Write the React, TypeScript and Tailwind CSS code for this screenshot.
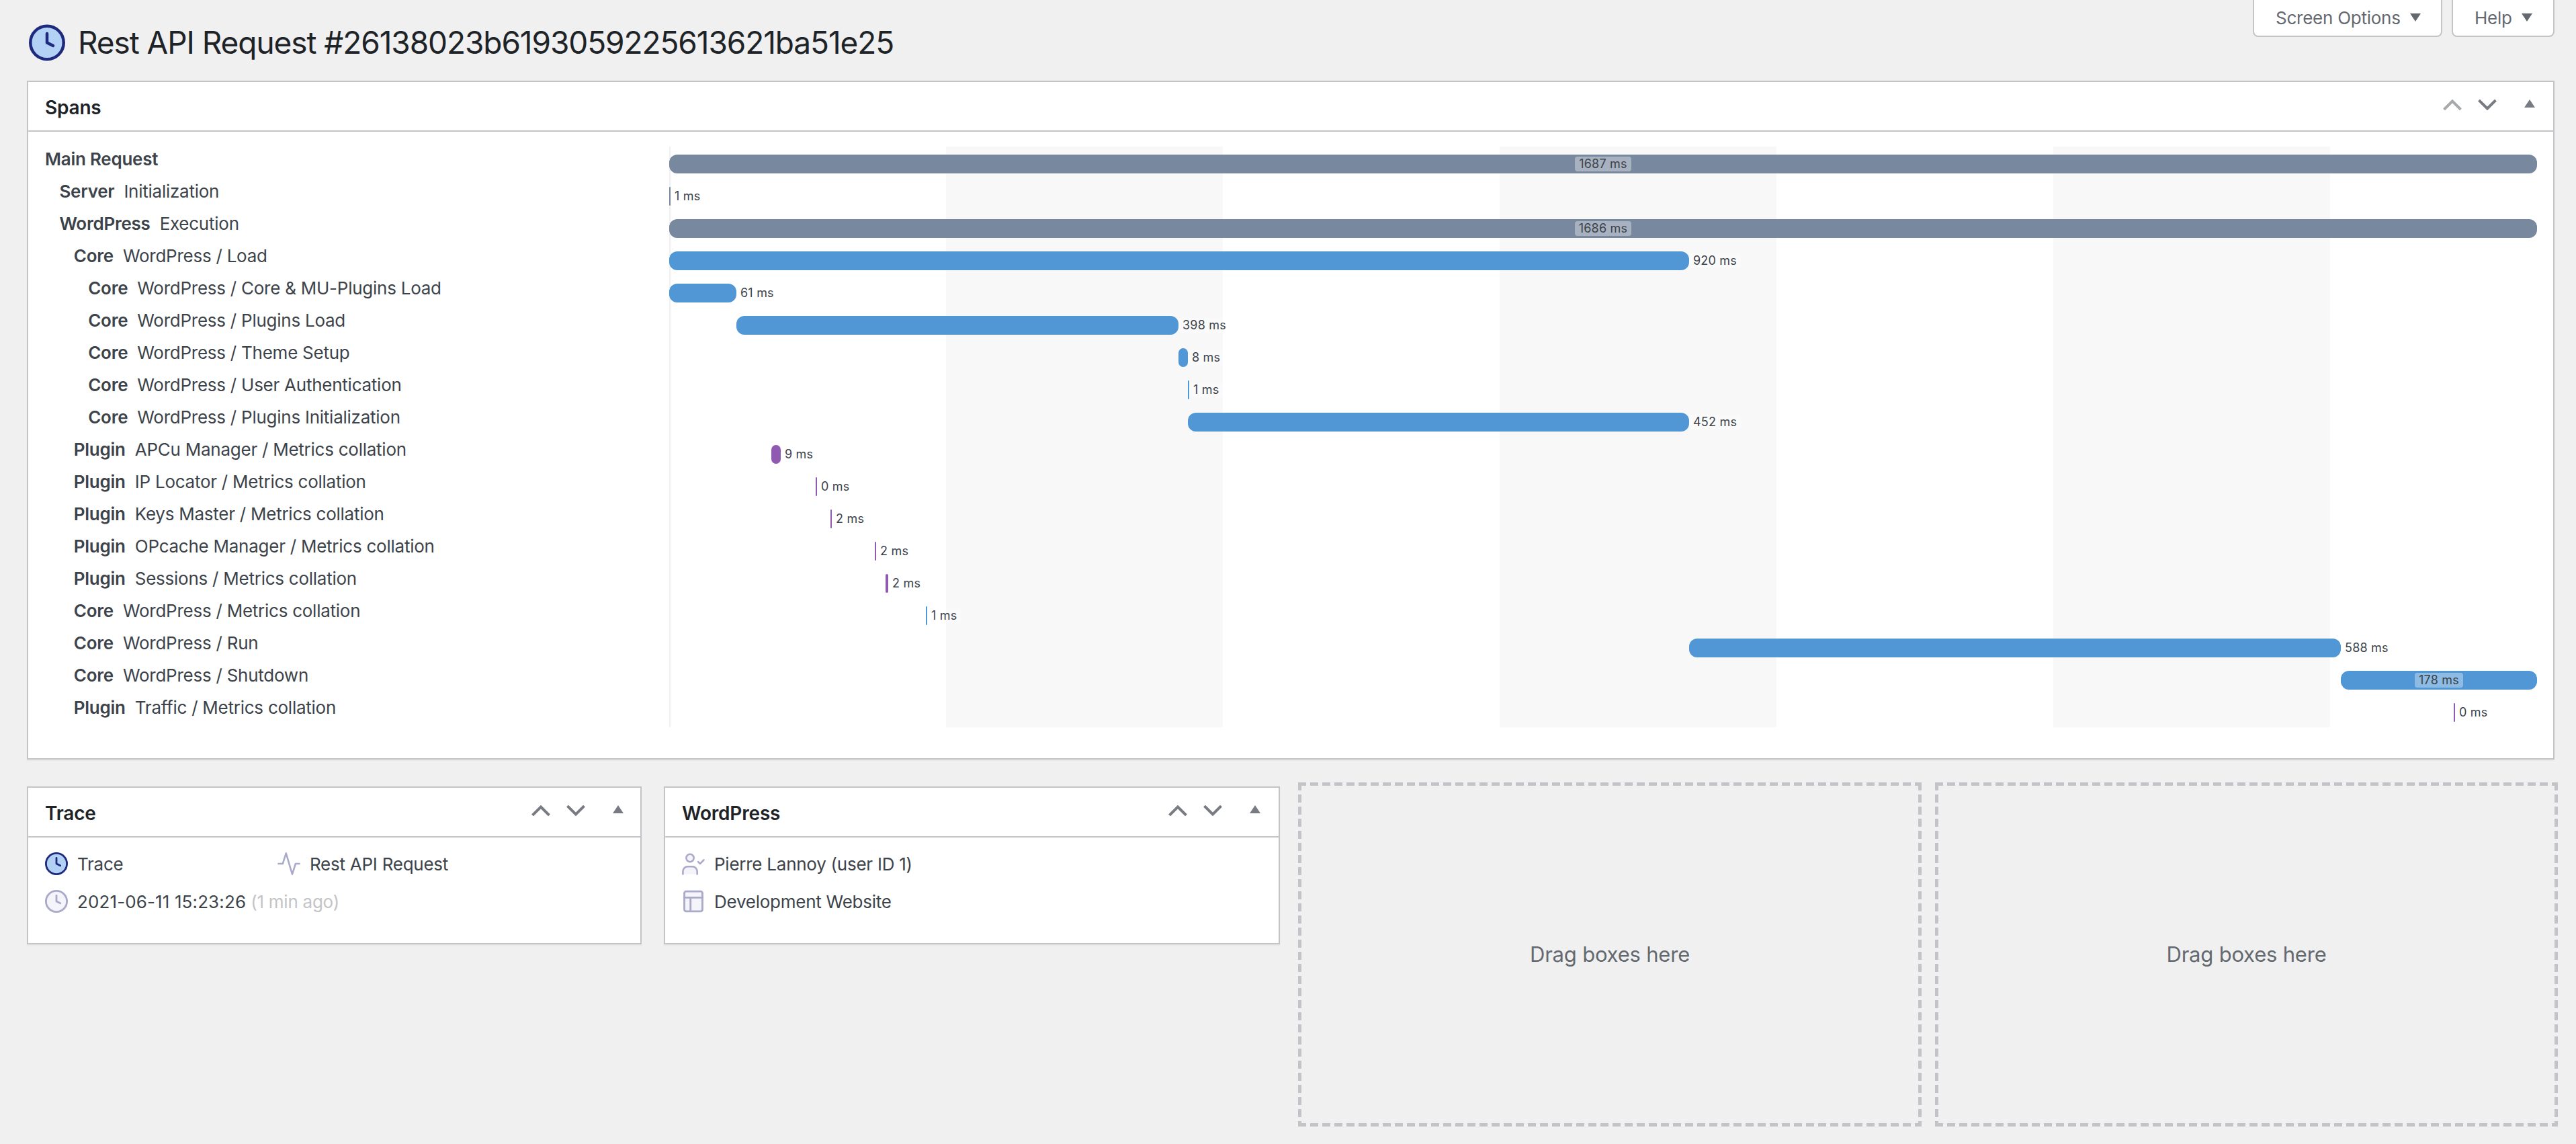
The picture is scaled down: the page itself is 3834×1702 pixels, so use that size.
const spanLabels = [
  { level: 0, kind: 'Main Request', name: '' },
  { level: 1, kind: 'Server', name: 'Initialization' },
  { level: 1, kind: 'WordPress', name: 'Execution' },
  { level: 2, kind: 'Core', name: 'WordPress / Load' },
  { level: 3, kind: 'Core', name: 'WordPress / Core & MU-Plugins Load' },
  { level: 3, kind: 'Core', name: 'WordPress / Plugins Load' },
  { level: 3, kind: 'Core', name: 'WordPress / Theme Setup' },
  { level: 3, kind: 'Core', name: 'WordPress / User Authentication' },
  { level: 3, kind: 'Core', name: 'WordPress / Plugins Initialization' },
  { level: 2, kind: 'Plugin', name: 'APCu Manager / Metrics collation' },
  { level: 2, kind: 'Plugin', name: 'IP Locator / Metrics collation' },
  { level: 2, kind: 'Plugin', name: 'Keys Master / Metrics collation' },
  { level: 2, kind: 'Plugin', name: 'OPcache Manager / Metrics collation' },
  { level: 2, kind: 'Plugin', name: 'Sessions / Metrics collation' },
  { level: 2, kind: 'Core', name: 'WordPress / Metrics collation' },
  { level: 2, kind: 'Core', name: 'WordPress / Run' },
  { level: 2, kind: 'Core', name: 'WordPress / Shutdown' },
  { level: 2, kind: 'Plugin', name: 'Traffic / Metrics collation' },
];

const GREY = '#78889e';
const BLUE = '#5197d5';
const PURPLE = '#8f5bb0';

// x and w are px from the left of the chart
const bars = [
  { x: 0, w: 2780, color: GREY, label: '1687 ms', inside: true },
  { x: 0, w: 2, color: GREY, label: '1 ms' },
  { x: 0, w: 2780, color: GREY, label: '1686 ms', inside: true },
  { x: 0, w: 1518, color: BLUE, label: '920 ms' },
  { x: 0, w: 100, color: BLUE, label: '61 ms' },
  { x: 100, w: 658, color: BLUE, label: '398 ms' },
  { x: 758, w: 14, color: BLUE, label: '8 ms' },
  { x: 772, w: 2, color: BLUE, label: '1 ms' },
  { x: 772, w: 746, color: BLUE, label: '452 ms' },
  { x: 152, w: 14, color: PURPLE, label: '9 ms' },
  { x: 218, w: 2, color: PURPLE, label: '0 ms' },
  { x: 240, w: 2, color: PURPLE, label: '2 ms' },
  { x: 306, w: 2, color: PURPLE, label: '2 ms' },
  { x: 322, w: 4, color: PURPLE, label: '2 ms' },
  { x: 382, w: 2, color: BLUE, label: '1 ms' },
  { x: 1518, w: 970, color: BLUE, label: '588 ms' },
  { x: 2488, w: 292, color: BLUE, label: '178 ms', inside: true },
  { x: 2656, w: 2, color: PURPLE, label: '0 ms' },
];

function ClockIcon({ className, stroke, fill }: { className: string; stroke: string; fill: string }) {
  return (
    <svg viewBox="0 0 24 24" className={className} fill="none" stroke={stroke} strokeWidth="2" strokeLinecap="round" strokeLinejoin="round">
      <circle cx="12" cy="12" r="11" fill={fill} />
      <polyline points="12 6 12 12 16 14" />
    </svg>
  );
}

function ActivityIcon() {
  return (
    <svg viewBox="0 0 24 24" className="w-[34px] h-[34px] shrink-0" fill="none" stroke="#a9a9c9" strokeWidth="1.8" strokeLinecap="round" strokeLinejoin="round">
      <polyline points="23 12 19 12 15.5 23 9 1 5.5 12 1 12" />
    </svg>
  );
}

function UserCheckIcon() {
  return (
    <svg viewBox="0 0 24 24" className="w-[34px] h-[34px] shrink-0" fill="none" stroke="#a9a9c9" strokeWidth="1.8" strokeLinecap="round" strokeLinejoin="round">
      <path d="M16 23v-3a5 5 0 0 0-5-5H6a5 5 0 0 0-5 5v3" fill="#f4f4fa" />
      <circle cx="8.5" cy="6" r="4" fill="#f4f4fa" />
      <polyline points="17 10 19 12 23 8" />
    </svg>
  );
}

function LayoutIcon() {
  return (
    <svg viewBox="0 0 24 24" className="w-[34px] h-[34px] shrink-0" fill="none" stroke="#a9a9c9" strokeWidth="2" strokeLinecap="round" strokeLinejoin="round">
      <rect x="2.5" y="1.5" width="19" height="21" rx="2" fill="#f4f4fa" />
      <line x1="2.5" y1="8" x2="21.5" y2="8" />
      <line x1="9" y1="22" x2="9" y2="8" />
    </svg>
  );
}

function Chevron({ up, className }: { up?: boolean; className: string }) {
  return (
    <svg viewBox="0 0 28 16" className={`w-[28px] h-[16px] ${className}`} fill="none" stroke="currentColor" strokeWidth="4">
      <polyline points={up ? '1.5 15 14 2.5 26.5 15' : '1.5 1 14 13.5 26.5 1'} />
    </svg>
  );
}

function Triangle({ down, className }: { down?: boolean; className: string }) {
  return (
    <svg viewBox="0 0 16 12" className={`w-[16px] h-[12px] ${className}`} fill="currentColor">
      <polygon points={down ? '0,0 16,0 8,12' : '0,12 16,12 8,0'} />
    </svg>
  );
}

function BoxHeader({ title, upDisabled, pr }: { title: string; upDisabled?: boolean; pr: string }) {
  return (
    <div className={`flex items-center justify-between h-[74px] pl-[25px] ${pr} border-b-2 border-[#c3c4c7]`}>
      <h2 className="text-[28px] font-semibold tracking-[-0.2px] text-[#1d2327] leading-none pt-[4px]">{title}</h2>
      <div className="flex items-start h-[16px] -mt-[4px]">
        <Chevron up className={upDisabled ? 'text-[#a7aaad]' : 'text-[#787c82]'} />
        <Chevron className="text-[#787c82] ml-[24px]" />
        <Triangle className="text-[#787c82] ml-[41px]" />
      </div>
    </div>
  );
}

function MetaRow({ icon, children, className = '' }: { icon: React.ReactNode; children: React.ReactNode; className?: string }) {
  return (
    <div className={`flex items-center gap-[14px] h-[34px] ${className}`}>
      {icon}
      <span className="whitespace-nowrap">{children}</span>
    </div>
  );
}

function DropZone({ className }: { className: string }) {
  return (
    <div
      className={`flex items-center justify-center h-[512px] text-[31px] tracking-[-0.2px] text-[#646970] [background:repeating-linear-gradient(90deg,#c3c4c7_0_12px,transparent_12px_18px)_top/100%_5px_no-repeat,repeating-linear-gradient(90deg,#c3c4c7_0_12px,transparent_12px_18px)_bottom/100%_5px_no-repeat,repeating-linear-gradient(180deg,#c3c4c7_0_12px,transparent_12px_18px)_left/5px_100%_no-repeat,repeating-linear-gradient(180deg,#c3c4c7_0_12px,transparent_12px_18px)_right/5px_100%_no-repeat] ${className}`}
    >
      Drag boxes here
    </div>
  );
}

function SpansChart() {
  return (
    <div className="relative w-[2780px] h-[864px] mt-[22px] shrink-0">
      <div className="absolute inset-0 flex border-l-2 border-[#f0f0f0]">
        <div className="w-[410px]" />
        <div className="w-[412px] bg-[#f8f8f8]" />
        <div className="w-[412px]" />
        <div className="w-[412px] bg-[#f8f8f8]" />
        <div className="w-[412px]" />
        <div className="w-[412px] bg-[#f8f8f8]" />
      </div>
      <div className="relative pt-[2px]">
        {bars.map((bar, i) => (
          <div key={i} className="flex items-center h-[48px] text-[18px] tracking-[0.2px] text-[#3c434a]" style={{ paddingLeft: bar.x }}>
            <div
              className="flex items-center justify-center h-[28px] rounded-[12px] shrink-0"
              style={{ width: bar.w, backgroundColor: bar.color }}
            >
              {bar.inside && <span className="h-[22px] leading-[22px] px-[6px] rounded-[4px] bg-white/35">{bar.label}</span>}
            </div>
            {!bar.inside && <span className="h-[22px] leading-[22px] px-[6px] rounded-[4px] bg-white/35 whitespace-nowrap">{bar.label}</span>}
          </div>
        ))}
      </div>
    </div>
  );
}

export default function App() {
  return (
    <div className="min-h-screen bg-[#f0f0f1] [font-family:Inter,sans-serif] text-[26px] tracking-[-0.25px] text-[#3c434a] overflow-hidden">
      <header className="flex justify-between items-start h-[120px] pl-[43px] pr-[32px]">
        <div className="flex items-center gap-[19px] pt-[36px]">
          <ClockIcon className="w-[54px] h-[55px]" stroke="#1d2a7d" fill="#b3d0f5" />
          <h1 className="text-[46px] leading-[55px] tracking-[-1.08px] text-[#1d2327] whitespace-nowrap">Rest API Request #26138023b6193059225613621ba51e25</h1>
        </div>
        <div className="flex gap-[14px]">
          <div className="flex items-center h-[55px] w-[282px] pl-[32px] bg-white border-2 border-t-0 border-[#c3c4c7] rounded-b-[8px] text-[#646970]">
            Screen Options
            <Triangle down className="text-[#646970] ml-[14px] -mt-[2px]" />
          </div>
          <div className="flex items-center h-[55px] w-[153px] pl-[32px] bg-white border-2 border-t-0 border-[#c3c4c7] rounded-b-[8px] text-[#646970]">
            Help
            <Triangle down className="text-[#646970] ml-[14px] -mt-[2px]" />
          </div>
        </div>
      </header>

      <section className="ml-[40px] mr-[32px] bg-white border-2 border-[#c3c4c7] shadow-[0_2px_2px_rgba(0,0,0,0.04)]">
        <BoxHeader title="Spans" upDisabled pr="pr-[27px]" />
        <div className="flex h-[932px]">
          <div className="w-[954px] shrink-0 pt-[16px] pl-[25px]">
            {spanLabels.map((span, i) => (
              <div key={i} className="flex items-center h-[48px] whitespace-nowrap" style={{ paddingLeft: span.level * 21.4 }}>
                <span className="font-semibold">{span.kind}</span>
                {span.name && <span className="ml-[14px]">{span.name}</span>}
              </div>
            ))}
          </div>
          <SpansChart />
        </div>
      </section>

      <div className="flex items-start mt-[34px] pl-[40px]">
        <section className="w-[915px] h-[235px] mt-[6px] bg-white border-2 border-[#c3c4c7] shadow-[0_2px_2px_rgba(0,0,0,0.04)]">
          <BoxHeader title="Trace" pr="pr-[25px]" />
          <div className="pt-[22px] pl-[25px]">
            <div className="flex">
              <MetaRow className="w-[346px]" icon={<ClockIcon className="w-[34px] h-[34px] shrink-0" stroke="#1d2a7d" fill="#b3d0f5" />}>Trace</MetaRow>
              <MetaRow icon={<ActivityIcon />}>Rest API Request</MetaRow>
            </div>
            <MetaRow className="mt-[22px]" icon={<ClockIcon className="w-[34px] h-[34px] shrink-0" stroke="#a9a9c9" fill="#f4f4fa" />}>
              <span className="tracking-[0.12px]">2021-06-11 15:23:26</span> <span className="text-[#c3c4c7]">(1 min ago)</span>
            </MetaRow>
          </div>
        </section>
        <section className="w-[917px] h-[235px] mt-[6px] ml-[33px] bg-white border-2 border-[#c3c4c7] shadow-[0_2px_2px_rgba(0,0,0,0.04)]">
          <BoxHeader title="WordPress" pr="pr-[27px]" />
          <div className="pt-[22px] pl-[25px]">
            <MetaRow icon={<UserCheckIcon />}>Pierre Lannoy (user ID 1)</MetaRow>
            <MetaRow className="mt-[22px]" icon={<LayoutIcon />}>Development Website</MetaRow>
          </div>
        </section>
        <DropZone className="w-[928px] ml-[27px]" />
        <DropZone className="w-[927px] ml-[20px]" />
      </div>
    </div>
  );
}
